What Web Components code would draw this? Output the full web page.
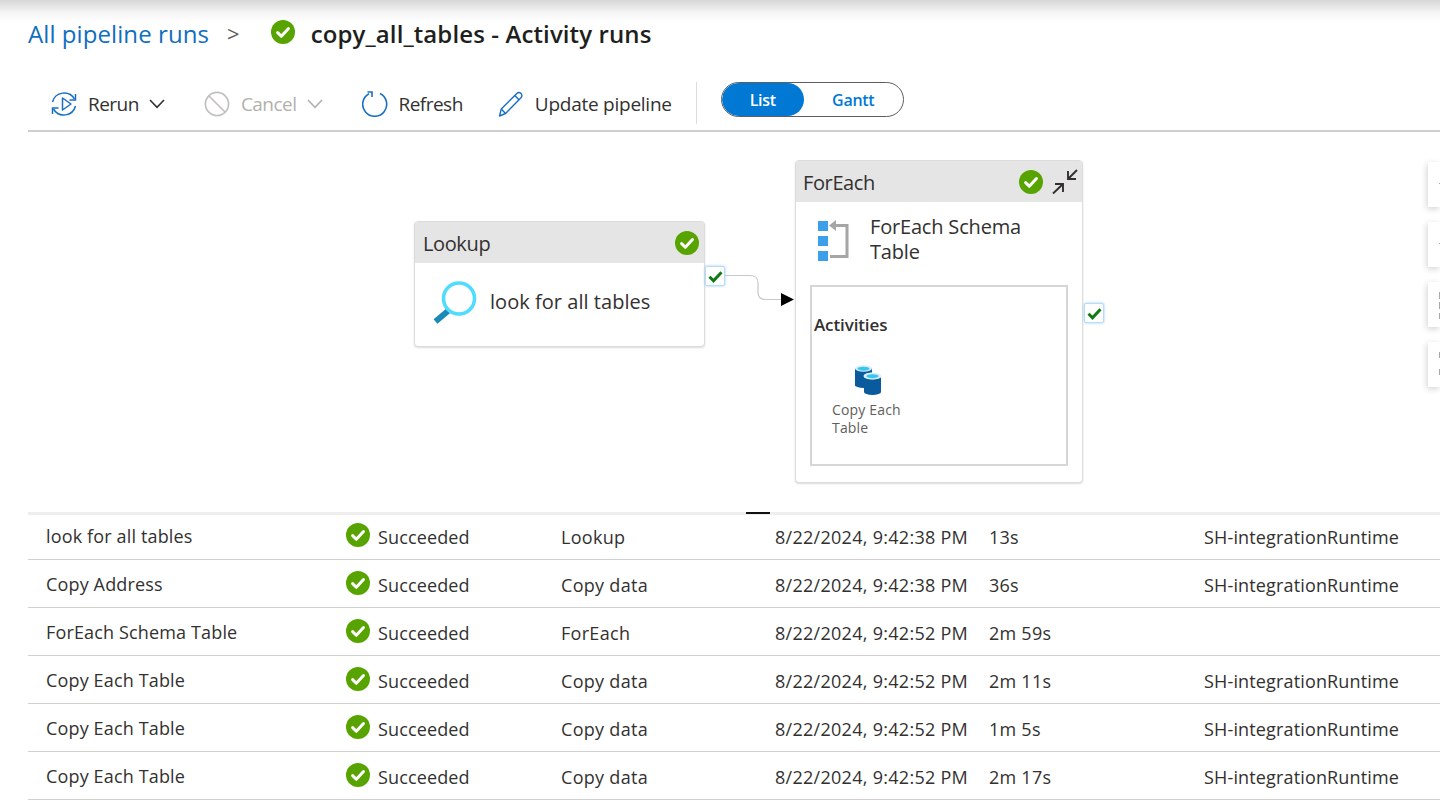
<!DOCTYPE html>
<html lang="en">
<head>
<meta charset="utf-8">
<title>Activity runs</title>
<style>
html,body{margin:0;padding:0;background:#fff;overflow:hidden}
body{font-family:"Open Sans","Noto Sans",sans-serif;color:#323130;width:1440px;height:802px}
</style>
</head>
<body>
<app-page>
  <title-bar></title-bar>
  <tool-bar></tool-bar>
  <pipeline-canvas></pipeline-canvas>
  <run-table></run-table>
</app-page>
<script>
const CHECK=(d)=>`<svg width="${d}" height="${d}" viewBox="0 0 24 24" style="display:block;flex:none"><circle cx="12" cy="12" r="12" fill="#57a300"/><path d="M6.600 12.600l3.700 3.700 7.200-7.800" fill="none" stroke="#fff" stroke-width="3" stroke-linecap="round" stroke-linejoin="round"/></svg>`;
const CHEV=(c)=>`<svg width="16" height="10" viewBox="0 0 16 10" style="display:block"><path d="M1 1l7 7.400L15 1" fill="none" stroke="${c}" stroke-width="1.600"/></svg>`;
function def(name,css,html){
  customElements.define(name,class extends HTMLElement{
    constructor(){super();this.attachShadow({mode:'open'});}
    connectedCallback(){this.shadowRoot.innerHTML=`<style>${css}</style>`+(typeof html==='function'?html(this):html);}
  });
}
def('app-page',`:host{display:flex;flex-direction:column;width:1440px;height:802px;overflow:hidden}`,`<slot></slot>`);
def('title-bar',`:host{display:flex;align-items:center;height:80px;box-sizing:border-box;padding:0 0 14px 28px;background:linear-gradient(#d6d6d6 0,#f4f4f4 12px,#fff 22px);font-size:24px;letter-spacing:.08px}
a{color:#106ebe;text-decoration:none}
.sep{color:#605e5c;font-size:22px;margin:0 31px 0 18px;position:relative;top:0}
.t{color:#201f1e;font-weight:600;margin-left:16px;letter-spacing:.11px}
.c{position:relative;top:-1px}`,
`<a href="#">All pipeline runs</a><span class="sep">&gt;</span><span class="c">${CHECK(24)}</span><span class="t">copy_all_tables - Activity runs</span>`);
def('tool-btn',`:host{display:flex;align-items:center;height:50px;font-size:19px;letter-spacing:var(--ls,-.52px);color:#323130}
:host([disabled]){color:#b3b0ad}
.i{display:flex;width:26px;height:26px;flex:none}
.t{margin-left:var(--g,11px);white-space:nowrap}
.c{margin-left:10px}`,
(el)=>`<span class="i"><slot name="icon"></slot></span><span class="t"><slot></slot></span>`+(el.hasAttribute('menu')?`<span class="c">${CHEV(el.hasAttribute('disabled')?'#b3b0ad':'#323130')}</span>`:''));
def('view-toggle',`:host{display:flex;width:183px;height:35px;box-sizing:border-box;border:1px solid #605e5c;border-radius:18px;font-size:16px;font-weight:600;letter-spacing:-.3px;margin-top:-9px;overflow:hidden}
.a{width:82px;background:#0078d4;color:#fff;border-radius:17px;display:flex;align-items:center;justify-content:center;padding-top:1px;box-sizing:border-box}
.b{flex:1;color:#0078d4;display:flex;align-items:center;justify-content:center;padding-top:1px}`,
`<span class="a">List</span><span class="b">Gantt</span>`);
def('tool-bar',`:host{display:flex;align-items:center;height:52px;box-sizing:border-box;margin-left:28px;padding:0 0 2px 23px;border-bottom:2px solid #cfcfcf}
svg{display:block}
.sep{width:1px;height:42px;background:#dcdcdc;margin:-3px 24px 0}`,
`<tool-btn menu><svg slot="icon" width="26" height="26" viewBox="0 0 26 26" fill="none" stroke="#1a6fc4" stroke-width="1.500"><path d="M1.500 11A12 12 0 0 1 23.500 8"/><path d="M24.500 3v6h-6"/><path d="M24.500 15A12 12 0 0 1 2.500 18"/><path d="M1.500 23v-6h6"/><path d="M11.500 7l8.500 6-8.500 6z" stroke-linejoin="round"/></svg>Rerun</tool-btn>
<tool-btn menu disabled style="margin-left:39px"><svg slot="icon" width="26" height="26" viewBox="0 0 26 26" fill="none" stroke="#c2c0be" stroke-width="1.700"><circle cx="13" cy="13" r="11.600"/><path d="M5 5l16 16"/></svg>Cancel</tool-btn>
<tool-btn style="margin-left:39px"><svg slot="icon" width="26" height="26" viewBox="0 0 26 26" fill="none" stroke="#1a6fc4" stroke-width="1.600"><path d="M18 2.500A12 12 0 1 1 7 2.700"/><path d="M5.500 1H10V6"/></svg>Refresh</tool-btn>
<tool-btn style="margin-left:35px;--ls:-.25px"><svg slot="icon" width="26" height="26" viewBox="0 0 26 26" fill="none" stroke="#1a6fc4" stroke-width="1.400" stroke-linejoin="round"><path d="M1.500 25l1.800-7L18.800 2.500c1.200-1.200 3-1.200 4.200 0s1.200 3 0 4.200L7.500 22.500z"/><path d="M3.300 18l4.200 4.500M16.800 4.500l4.400 4.400"/></svg>Update pipeline</tool-btn>
<span class="sep"></span><view-toggle></view-toggle>`);
def('status-box',`:host{position:absolute;width:20px;height:20px;box-sizing:border-box;background:#fff;border:1px solid #b9dbf5;border-radius:2px;box-shadow:0 0 3px #9ccdf2;display:flex;align-items:center;justify-content:center}`,
`<svg width="15" height="13" viewBox="0 0 15 13"><path d="M1.500 6.800l4 4L13.500 2.200" fill="none" stroke="#107c10" stroke-width="3"/></svg>`);
def('activity-node',`:host{position:absolute;display:flex;flex-direction:column;box-sizing:border-box;background:#fff;border:1px solid #dcdcdc;border-radius:4px;box-shadow:0 1px 2px rgba(0,0,0,.14);color:#323130;letter-spacing:-.38px}
header{display:flex;align-items:center;height:41px;flex:none;background:#e5e5e5;padding:0 var(--pr,6px) 0 var(--pl,8px);font-size:20px;border-radius:3px 3px 0 0}
.n{flex:1;position:relative;top:var(--nt,0)}
.b{display:flex;flex-direction:column;flex:1;min-height:0}`,
(el)=>`<header><span class="n">${el.getAttribute('kind')}</span><slot name="head"></slot></header><div class="b"><slot></slot></div>`);
def('node-body',`:host{display:flex;align-items:flex-start;font-size:20px;line-height:25px;letter-spacing:var(--ls,-.18px)}`,`<slot name="icon"></slot><span class="t"><slot></slot></span>`);
def('inner-activity',`:host{display:block;box-sizing:border-box;width:258px;height:181px;margin:0;border:2px solid #d6d6d6;padding:27px 2px 0 2px;position:relative}
h4{margin:0;font-size:17px;line-height:22px;font-weight:600;color:#323130;letter-spacing:-.12px}
.w{margin:29px 0 0 18px;width:90px;font-size:14px;line-height:18px;color:#605e5c;letter-spacing:.17px}
svg{display:block;margin:0 0 6px 23px}`,
`<h4>Activities</h4><div class="w"><svg width="27" height="30" viewBox="0 0 27 30"><rect x="0" y="3" width="17" height="18" rx="1" fill="#0a5a9e"/><ellipse cx="8.500" cy="20" rx="8.500" ry="3" fill="#0a5a9e"/><ellipse cx="8.500" cy="3.500" rx="8.500" ry="3.200" fill="#d6ecf7"/><ellipse cx="8.500" cy="3.700" rx="6" ry="2" fill="#37c6ef"/><rect x="9" y="11" width="17" height="16" fill="#0a5a9e"/><ellipse cx="17.500" cy="27" rx="8.500" ry="3" fill="#0a5a9e"/><ellipse cx="17.500" cy="11" rx="9" ry="3.600" fill="#fff"/><ellipse cx="17.500" cy="11" rx="8.500" ry="3.200" fill="#d6ecf7"/><ellipse cx="17.500" cy="11.200" rx="6" ry="2" fill="#37c6ef"/></svg>Copy Each Table</div>`);
def('side-tab',`:host{position:absolute;left:1428px;width:12px;height:45px;background:#fff;box-shadow:-1px 2px 6px rgba(0,0,0,.18);overflow:hidden}
i{position:absolute;left:11px;width:1px;background:#a8a8a8}`,
(el)=>(el.getAttribute('ticks')||'').split(',').map(p=>{const[a,b]=p.split(':');return `<i style="top:${a}px;height:${b}px"></i>`}).join(''));
def('pipeline-canvas',`:host{display:block;position:relative;height:380px;flex:none}
svg{display:block}
.wire{position:absolute;left:720px;top:135px}
.collapse{display:flex;margin-left:8px}`,
`<activity-node kind="Lookup" style="left:414px;top:89px;width:291px;height:126px;--nt:1px;--pr:5px"><span slot="head" style="display:flex">${CHECK(24)}</span>
  <node-body style="padding:18px 0 0 18px;--ls:.04px"><svg slot="icon" width="44" height="44" viewBox="0 0 44 44" style="display:block;margin-right:13px;flex:none"><path d="M2.500 40.500L15 30" stroke="#1b8ab8" stroke-width="6" fill="none"/><circle cx="26" cy="17.500" r="15.500" fill="#fff" stroke="#4fdcff" stroke-width="3.600"/></svg><span style="position:relative;top:8px">look for all tables</span></node-body></activity-node>
<status-box style="left:705px;top:134px"></status-box>
<svg class="wire" width="80" height="50" viewBox="0 0 80 50" fill="none"><path d="M5 8.500h25c5 0 8 3 8 7v10c0 5 3 7 8 7h17" stroke="#c8c8c8" stroke-width="1.200"/><path d="M61 26l13 6.500-13 6.500z" fill="#000"/></svg>
<activity-node kind="ForEach" style="left:795px;top:28px;width:288px;height:323px;--pr:4px;--pl:7px;--nt:1px"><span slot="head" style="display:flex;align-items:center">${CHECK(24)}<span class="collapse" style="margin-left:9px"><svg width="26" height="26" viewBox="0 0 26 26" fill="none" stroke="#323130" stroke-width="1.900"><path d="M1 24.500L11 15M3 15h8v8"/><path d="M25 1L16 10M16 2v8h8"/></svg></span></span>
  <node-body style="padding:12px 0 0 21px"><svg slot="icon" width="32" height="42" viewBox="0 0 32 42" style="display:block;margin-right:21px;margin-top:6px;flex:none"><rect x="1" y="1" width="10" height="10" fill="#3b9fea"/><rect x="1" y="16" width="10" height="10" fill="#3b9fea"/><rect x="1" y="31" width="10" height="10" fill="#3b9fea"/><path d="M16 5.500h14v31H13" fill="none" stroke="#a6a6a6" stroke-width="3"/><path d="M19 0v11l-7-5.500z" fill="#a6a6a6"/></svg>ForEach Schema<br>Table</node-body>
  <inner-activity style="position:absolute;left:14px;top:124px"></inner-activity></activity-node>
<status-box style="left:1084px;top:171px"></status-box>
<side-tab style="top:30px" ticks="21:1"></side-tab>
<side-tab style="top:90px" ticks="21:1"></side-tab>
<side-tab style="top:150px" ticks="10:7,20:7,31:6"></side-tab>
<side-tab style="top:210px" ticks="10:6,27:6"></side-tab>`);
def('status-cell',`:host{display:flex;align-items:center;gap:8px;letter-spacing:.13px}.t{position:relative;top:1px}.c{position:relative;top:-1px}`,`<span class="c">${CHECK(24)}</span><span class="t"><slot></slot></span>`);
def('run-row',`:host{display:grid;grid-template-columns:300px 215px 214px 214px 215px 195px;align-items:center;height:48px;box-sizing:border-box;padding-left:18px;border-bottom:1px solid #d2d0ce;font-size:18px;letter-spacing:.15px;color:#323130}
:host(:first-child){margin-top:-3px}
.c{white-space:nowrap;overflow:hidden;position:relative;top:1px}
.n{top:0}
.ty{letter-spacing:.3px}
.d{letter-spacing:.28px}
.u{letter-spacing:.24px}`,
(el)=>{const [n,t,d,u,r]=['name','type','date','dur','ir'].map(k=>el.getAttribute(k)||'');return `<span class="c n">${n}</span><status-cell>Succeeded</status-cell><span class="c ty">${t}</span><span class="c d">${d}</span><span class="c u">${u}</span><span class="c">${r}</span>`;});
def('run-table',`:host{display:block;position:relative;margin-left:28px;border-top:3px solid #eeeeee}
.h{position:absolute;left:718px;top:-3px;width:24px;height:2px;background:#111}`,
`<span class="h"></span><slot></slot>`);
const rows=[["look for all tables","Lookup","8/22/2024, 9:42:38 PM","13s","SH-integrationRuntime"],["Copy Address","Copy data","8/22/2024, 9:42:38 PM","36s","SH-integrationRuntime"],["ForEach Schema Table","ForEach","8/22/2024, 9:42:52 PM","2m 59s",""],["Copy Each Table","Copy data","8/22/2024, 9:42:52 PM","2m 11s","SH-integrationRuntime"],["Copy Each Table","Copy data","8/22/2024, 9:42:52 PM","1m 5s","SH-integrationRuntime"],["Copy Each Table","Copy data","8/22/2024, 9:42:52 PM","2m 17s","SH-integrationRuntime"]];
const tbl=document.querySelector('run-table');
for(const r of rows){const e=document.createElement('run-row');['name','type','date','dur','ir'].forEach((k,i)=>e.setAttribute(k,r[i]));tbl.appendChild(e);}
</script>
</body>
</html>
